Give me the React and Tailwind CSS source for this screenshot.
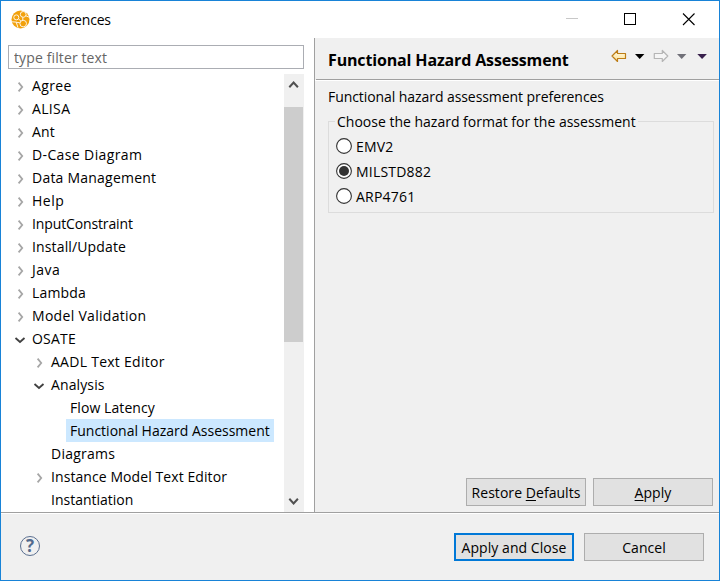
import React from "react";

const ROWS = [
  { label: "Agree", level: 0, state: "closed", track: "tracking-[0.35px]" },
  { label: "ALISA", level: 0, state: "closed", track: "tracking-[0.35px]" },
  { label: "Ant", level: 0, state: "closed", track: "tracking-[0.2px]" },
  { label: "D-Case Diagram", level: 0, state: "closed", track: "tracking-[0.38px]" },
  { label: "Data Management", level: 0, state: "closed", track: "tracking-[0.22px]" },
  { label: "Help", level: 0, state: "closed", track: "tracking-[0.5px]" },
  { label: "InputConstraint", level: 0, state: "closed", track: "tracking-[-0.13px]" },
  { label: "Install/Update", level: 0, state: "closed", track: "tracking-[0.14px]" },
  { label: "Java", level: 0, state: "closed", track: "tracking-[0.5px]" },
  { label: "Lambda", level: 0, state: "closed", track: "tracking-[0.15px]" },
  { label: "Model Validation", level: 0, state: "closed", track: "tracking-[0.3px]" },
  { label: "OSATE", level: 0, state: "open", track: "tracking-[0.2px]" },
  { label: "AADL Text Editor", level: 1, state: "closed", track: "tracking-[0.27px]" },
  { label: "Analysis", level: 1, state: "open", track: "tracking-[0.12px]" },
  { label: "Flow Latency", level: 2, track: "tracking-[0.08px]" },
  { label: "Functional Hazard Assessment", level: 2, selected: true },
  { label: "Diagrams", level: 1, track: "tracking-[0.25px]" },
  { label: "Instance Model Text Editor", level: 1, state: "closed", track: "tracking-[0.08px]" },
  { label: "Instantiation", level: 1 },
];

const INDENT = ["pl-[13px]", "pl-8", "pl-[51px]"];

function Twisty({ state }) {
  return (
    <svg className="h-[23px] w-[14px] shrink-0" viewBox="0 0 14 23" fill="none">
      {state === "closed" && <path d="M4.6 8.7 8.2 13 4.6 17.3" stroke="#a6a6a6" strokeWidth="1.8" />}
      {state === "open" && <path d="M1.5 11 6 15 10.5 11" stroke="#404040" strokeWidth="1.8" />}
    </svg>
  );
}

function Row({ label, level, state, selected, track = "" }) {
  return (
    <div className={`flex h-[23px] shrink-0 ${INDENT[level]}`}>
      <Twisty state={state} />
      <span className={`h-[23px] px-1 leading-[23px] ${track} ${selected ? "bg-[#cce8ff]" : ""}`}>{label}</span>
    </div>
  );
}

function Radio({ label, checked }) {
  return (
    <label className="flex h-[25px] items-center gap-[4px]">
      <svg className="size-4" viewBox="0 0 16 16">
        <circle cx="8" cy="8" r="7.4" fill="#fff" stroke="#333" strokeWidth="1.1" />
        {checked && <circle cx="8" cy="8" r="5" fill="#333" />}
      </svg>
      <span className="pt-[2px] tracking-[0.2px]">{label}</span>
    </label>
  );
}

function Button({ children, primary }) {
  return (
    <button
      className={`h-7 w-[120px] bg-[#e1e1e1] pt-px text-center tracking-[0.05px] whitespace-nowrap underline-offset-2 ${
        primary ? "border-2 border-[#0078d7] leading-[24px]" : "border border-[#adadad] leading-[26px]"
      }`}
    >
      {children}
    </button>
  );
}

function AppIcon() {
  return (
    <svg className="size-[19px]" viewBox="0 0 19 19">
      <circle cx="9.5" cy="9.5" r="9" fill="#f2a10c" />
      <g fill="none" stroke="#fff" strokeWidth="1" opacity="0.9">
        <circle cx="12.2" cy="4.4" r="2.9" />
        <circle cx="5.3" cy="7.4" r="2.5" />
        <circle cx="12.2" cy="13.6" r="3.3" />
        <path d="M7.5 9l2.4 2M11.8 7.3v3M1 11.8l4.2.3 1.8 5.6M15 5.8l3 1.4M5 12.2l3.9.6" />
      </g>
    </svg>
  );
}

function TitleBar() {
  return (
    <header className="flex h-[37px] shrink-0 items-center pl-[10px] pr-[22px]">
      <AppIcon />
      <span className="ml-[5px] flex-1 tracking-[-0.2px]">Preferences</span>
      <svg className="h-[37px] w-[132px]" viewBox="565 1 132 37" fill="none" shapeRendering="crispEdges">
        <path d="M566 18.5h12" stroke="#c8c8c8" />
        <path d="M624.5 13.5h11v11h-11z" stroke="#000" />
        <path d="M683 13.5l11.5 11.5M694.5 13.5 683 25" stroke="#000" shapeRendering="auto" strokeWidth="1.1" />
      </svg>
    </header>
  );
}

function NavIcons() {
  return (
    <svg className="-mt-[6px] h-5 w-[100px]" viewBox="610 46 100 20">
      <defs>
        <linearGradient id="gold" x1="0" y1="0" x2="0" y2="1">
          <stop offset="0" stopColor="#fffbe8" />
          <stop offset="1" stopColor="#ffe293" />
        </linearGradient>
      </defs>
      <path d="M612 56l5.5-5.5v3h8v5h-8v3z" fill="url(#gold)" stroke="#bd7d16" strokeWidth="1.2" strokeLinejoin="round" />
      <path d="M635 54h9.4l-4.7 5z" fill="#000" />
      <path d="M667.8 56l-5.5-5.5v3h-8v5h8v3z" fill="#f5f5f5" stroke="#b5b5b5" strokeWidth="1.2" strokeLinejoin="round" />
      <path d="M677 54h9.4l-4.7 5z" fill="#707078" />
      <path d="M697.3 54h9.6l-4.8 5z" fill="#38204c" />
    </svg>
  );
}

function ScrollBar() {
  return (
    <div className="flex w-5 shrink-0 flex-col bg-[#f0f0f0]">
      <svg className="h-[33px] w-5" viewBox="0 0 20 33" fill="none">
        <path d="M5.3 13.3 9.6 8.6l4.3 4.7" stroke="#505050" strokeWidth="2" />
      </svg>
      <div className="h-[235px] w-[19px] bg-[#cdcdcd]" />
      <div className="flex-1" />
      <svg className="h-5 w-5" viewBox="0 0 20 20" fill="none">
        <path d="M5.3 6.7 9.6 11.4l4.3-4.7" stroke="#505050" strokeWidth="2" />
      </svg>
    </div>
  );
}

export default function App() {
  return (
    <div className="flex h-[581px] w-[720px] flex-col overflow-hidden border border-[#1883d7] bg-white font-['Open_Sans','Noto_Sans',sans-serif] text-[14px] text-black">
      <TitleBar />
      <main className="flex h-[474px] shrink-0">
        <section className="flex w-[313px] shrink-0 flex-col pl-[7px] pt-[7px]">
          <input
            className="h-6 w-[296px] shrink-0 border border-[#abadb3] px-[5px] text-[14px] tracking-[0.12px] placeholder:text-[#666] placeholder:opacity-100"
            placeholder="type filter text"
          />
          <div className="mt-[5px] flex min-h-0 flex-1">
            <div className="-ml-[7px] flex w-[283px] shrink-0 flex-col overflow-hidden whitespace-nowrap">
              {ROWS.map((row) => (
                <Row key={row.label} {...row} />
              ))}
            </div>
            <ScrollBar />
          </div>
        </section>
        <section className="flex flex-1 flex-col border-l border-[#a0a0a0] bg-[#f0f0f0]">
          <div className="ml-px flex h-[42px] shrink-0 items-center justify-between border-b border-[#a0a0a0] pl-3 pr-[9px]">
            <h1 className="pt-[3px] text-[16px] font-bold tracking-[-0.15px]">Functional Hazard Assessment</h1>
            <NavIcons />
          </div>
          <div className="h-px shrink-0 bg-white" />
          <div className="flex flex-1 flex-col pl-[13px] pr-[6px]">
            <p className="mt-[5px] h-[21px] leading-[21px] tracking-[-0.07px]">Functional hazard assessment preferences</p>
            <fieldset className="mt-[4px] -mr-px h-[102px] border border-[#dcdcdc] px-[7px]">
              <legend className="-ml-[1px] h-[20px] px-[2px] leading-[22px]">Choose the hazard format for the assessment</legend>
              <div className="mt-[2px]">
                <Radio label="EMV2" />
                <Radio label="MILSTD882" checked />
                <Radio label="ARP4761" />
              </div>
            </fieldset>
            <div className="mt-auto mb-[6px] flex justify-end gap-[7px]">
              <Button>
                Restore <u>D</u>efaults
              </Button>
              <Button>
                <u>A</u>pply
              </Button>
            </div>
          </div>
        </section>
      </main>
      <footer className="flex flex-1 flex-col border-t border-[#a0a0a0] bg-[#f0f0f0]">
        <div className="h-px bg-white" />
        <div className="flex flex-1 items-center justify-between pl-[19px] pr-[15px]">
          <div className="-mt-[3px] flex size-5 items-center justify-center rounded-full border border-[#5a6f90] text-[17px] leading-none font-bold text-[#526a8d]">
            ?
          </div>
          <div className="flex gap-[10px]">
            <Button primary>Apply and Close</Button>
            <Button>Cancel</Button>
          </div>
        </div>
      </footer>
    </div>
  );
}
